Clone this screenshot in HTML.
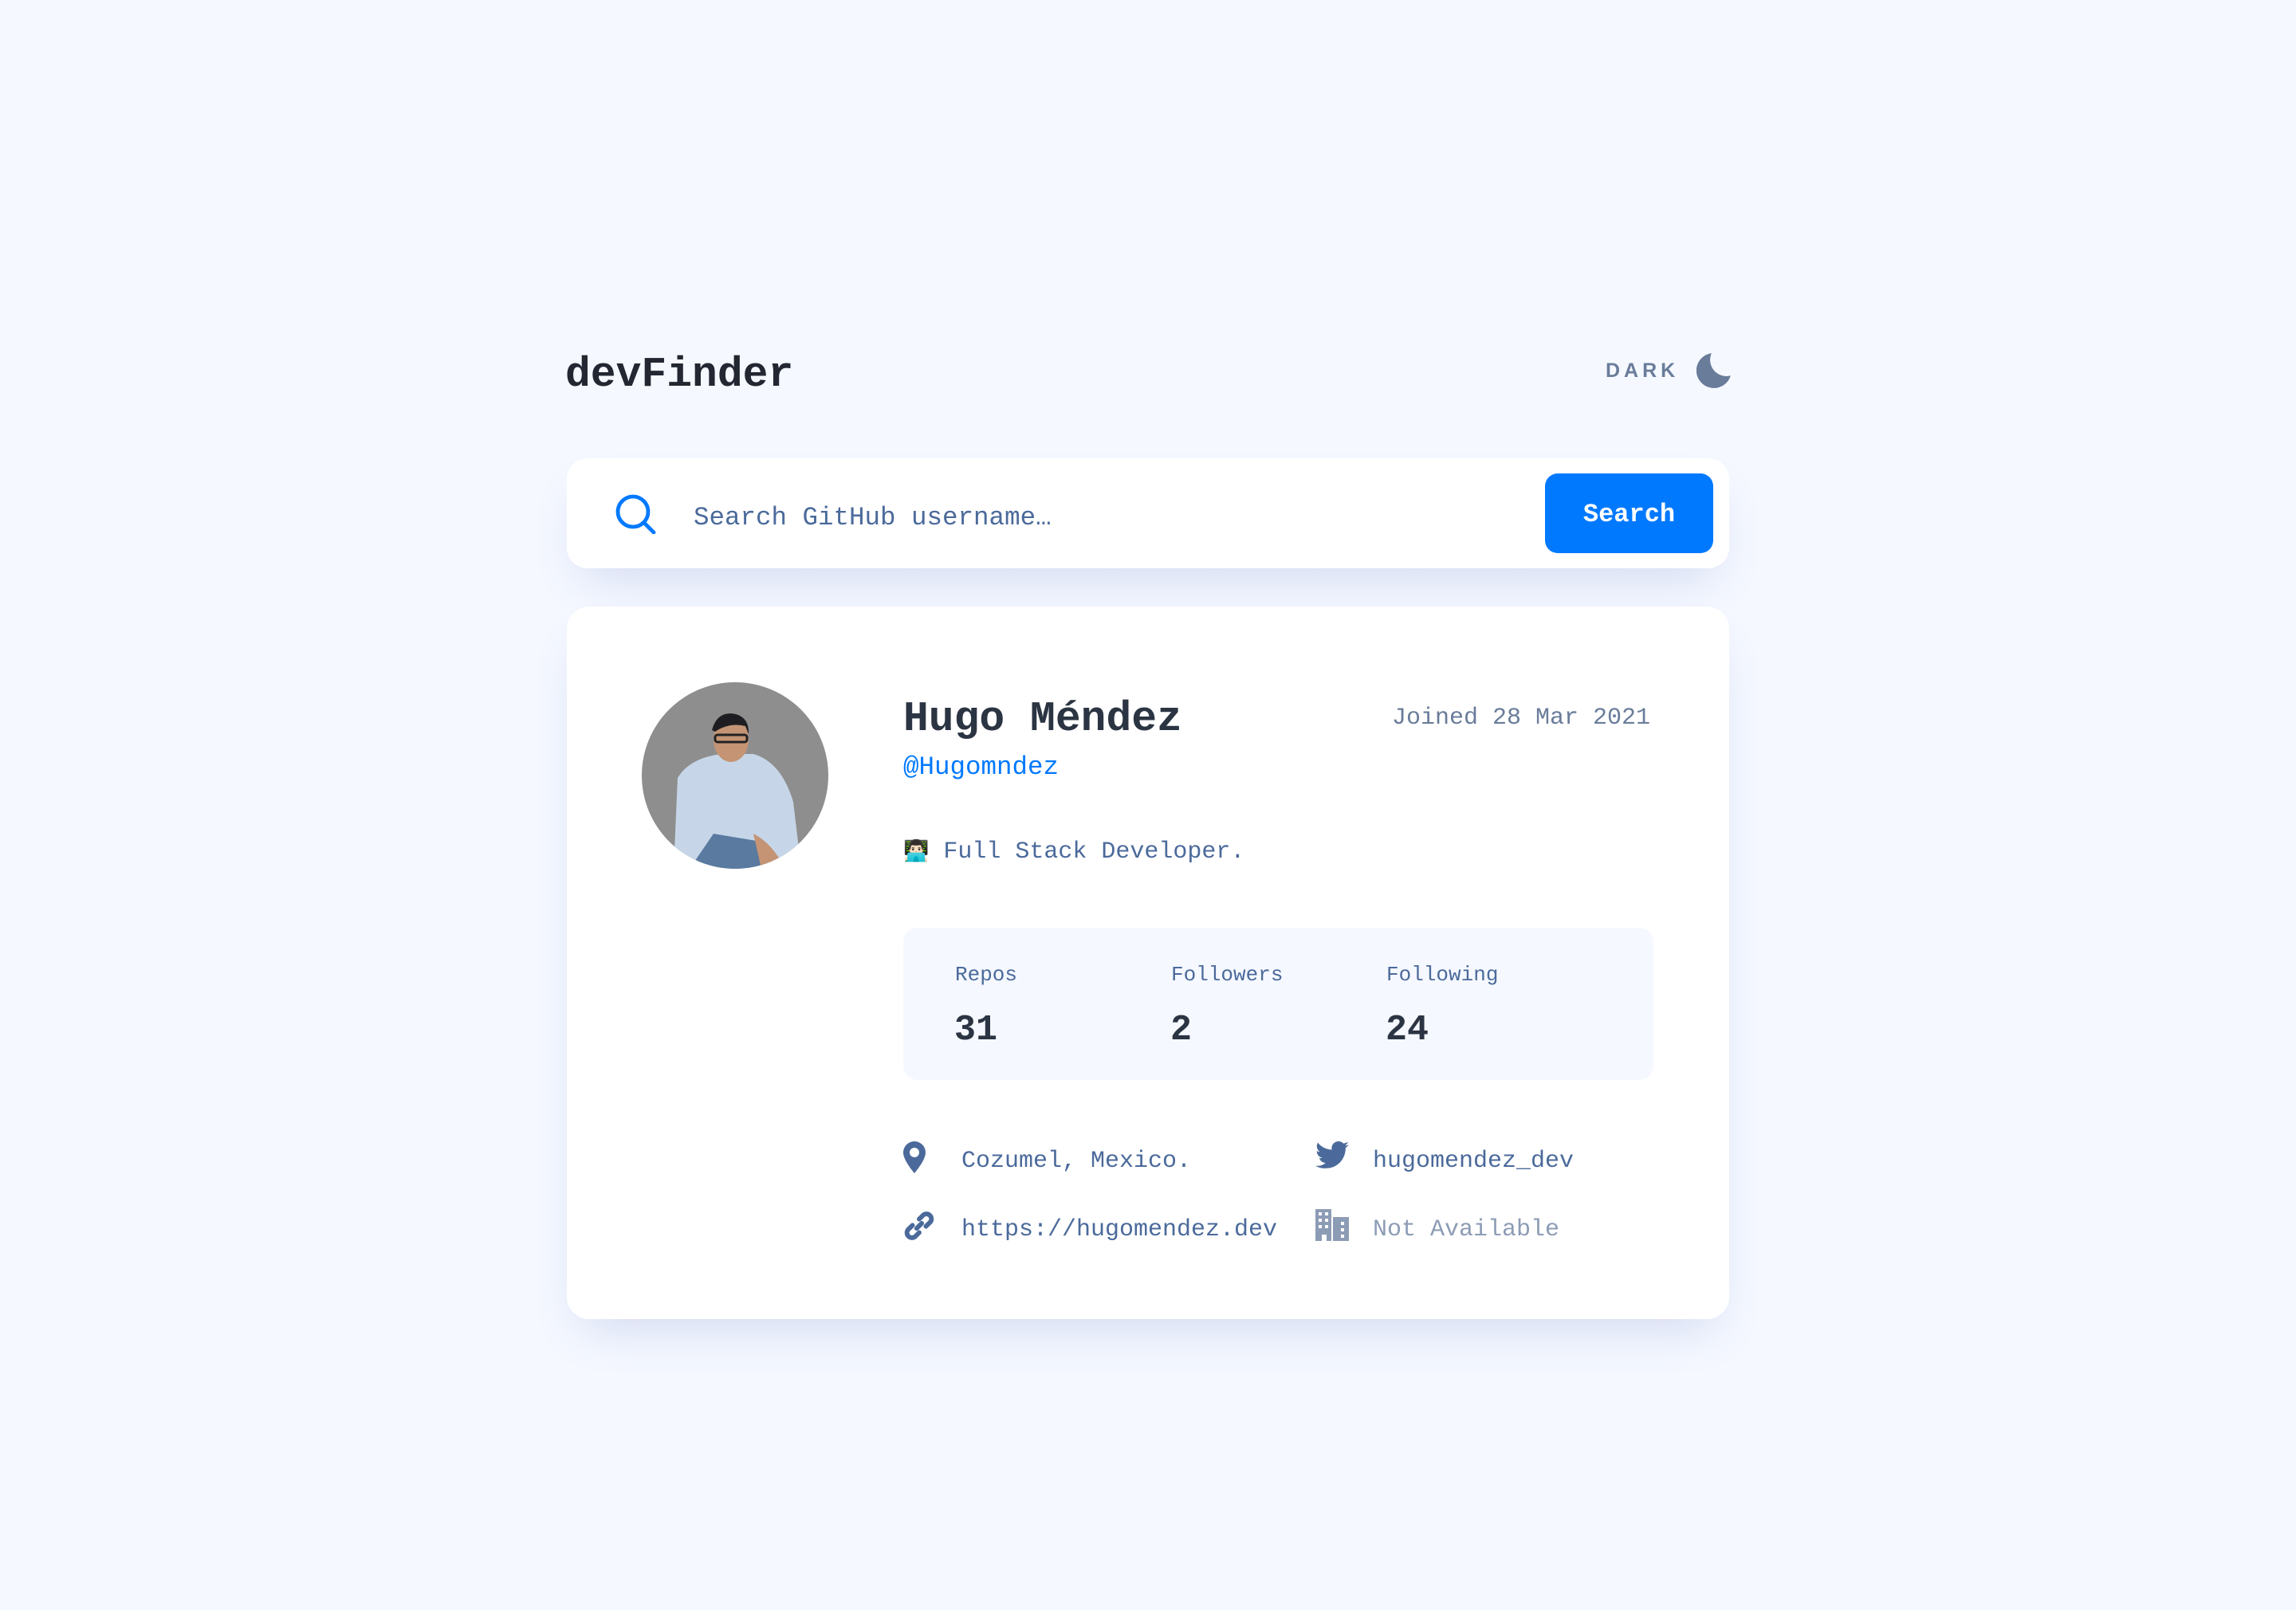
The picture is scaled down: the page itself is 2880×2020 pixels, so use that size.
<!DOCTYPE html>
<html><head><meta charset="utf-8"><style>
*{margin:0;padding:0;box-sizing:border-box}
body{width:2880px;height:2020px;background:#f5f8ff;font-family:"Liberation Mono",monospace;position:relative;overflow:hidden;color:#4b6a9b}
.a{position:absolute;white-space:nowrap}
.card{position:absolute;background:#fff;border-radius:28px;box-shadow:0 30px 60px -20px rgba(70,96,187,0.2)}
</style></head><body>
<div class="a" style="left:709px;top:440px;font-size:53px;line-height:60px;font-weight:bold;color:#222731">devFinder</div>
<div class="a" style="left:2014px;top:451px;font-size:25px;line-height:28px;font-weight:bold;letter-spacing:5px;color:#697c9a;font-family:'Liberation Sans',sans-serif">DARK</div>
<svg class="a" style="left:2128px;top:440px" width="44" height="48" viewBox="0 0 20 20"><path fill="#697c9a" d="M19.5 13.3A9.3 9.3 0 0 1 8.6 0.5a10 10 0 1 0 10.9 12.8z"/></svg>

<div class="card" style="left:711px;top:575px;width:1458px;height:138px;border-radius:26px"></div>
<svg class="a" style="left:772px;top:620px" width="52" height="50" viewBox="0 0 26 25"><circle cx="11" cy="11" r="9.5" fill="none" stroke="#0079ff" stroke-width="2.4"/><path d="M18 18l6 6" stroke="#0079ff" stroke-width="2.4" stroke-linecap="round"/></svg>
<div class="a" style="left:870px;top:631px;font-size:32.5px;line-height:38px;color:#4b6a9b">Search GitHub username…</div>
<div class="a" style="left:1938px;top:594px;width:211px;height:100px;background:#0079ff;border-radius:16px;color:#fff;font-weight:bold;font-size:32px;line-height:104px;text-align:center">Search</div>

<div class="card" style="left:711px;top:761px;width:1458px;height:894px"></div>
<svg class="a" style="left:805px;top:856px" width="234" height="234" viewBox="0 0 234 234">
<defs><clipPath id="c"><circle cx="117" cy="117" r="117"/></clipPath></defs>
<g clip-path="url(#c)">
<rect width="234" height="234" fill="#8e8e8e"/>
<path d="M40 234 L45 120 Q60 95 100 90 L140 90 Q175 100 190 150 L200 234Z" fill="#c6d6e8"/>
<path d="M60 234 L90 190 L150 200 L170 234Z" fill="#5a7aa0"/>
<ellipse cx="112" cy="72" rx="22" ry="28" fill="#c49474"/>
<path d="M88 60 Q95 35 118 40 Q135 45 134 65 L130 55 Q110 50 92 62Z" fill="#1e1e22"/>
<rect x="92" y="66" width="40" height="9" rx="3" fill="none" stroke="#222" stroke-width="3"/>
<path d="M140 190 Q160 200 175 225 L150 234 Z" fill="#c49474"/>
</g></svg>

<div class="a" style="left:1133px;top:872px;font-size:53px;line-height:60px;font-weight:bold;color:#2b3442">Hugo Méndez</div>
<div class="a" style="left:1746px;top:884px;font-size:30px;line-height:34px;color:#697c9a">Joined 28 Mar 2021</div>
<div class="a" style="left:1133px;top:944px;font-size:32.5px;line-height:38px;color:#0079ff">@Hugomndez</div>
<div class="a" style="left:1133px;top:1049px;font-size:30px;line-height:34px;color:#4b6a9b"><span style="font-family:'Noto Sans CJK JP',sans-serif;font-size:26px">👨🏻‍💻</span> Full Stack Developer.</div>

<div class="a" style="left:1133px;top:1164px;width:941px;height:191px;background:#f5f8ff;border-radius:18px"></div>
<div class="a" style="left:1198px;top:1208px;font-size:26px;line-height:30px">Repos</div>
<div class="a" style="left:1469px;top:1208px;font-size:26px;line-height:30px">Followers</div>
<div class="a" style="left:1739px;top:1208px;font-size:26px;line-height:30px">Following</div>
<div class="a" style="left:1197px;top:1267px;font-size:45px;line-height:52px;font-weight:bold;color:#2b3442">31</div>
<div class="a" style="left:1468px;top:1267px;font-size:45px;line-height:52px;font-weight:bold;color:#2b3442">2</div>
<div class="a" style="left:1738px;top:1267px;font-size:45px;line-height:52px;font-weight:bold;color:#2b3442">24</div>

<svg class="a" style="left:1133px;top:1432px" width="28" height="40" viewBox="0 0 14 20"><path fill="#4b6a9b" d="M7 0a7 7 0 0 0-7 7c0 5 7 13 7 13s7-8 7-13a7 7 0 0 0-7-7zm0 10a3 3 0 1 1 0-6 3 3 0 0 1 0 6z"/></svg>
<div class="a" style="left:1206px;top:1440px;font-size:30px;line-height:34px">Cozumel, Mexico.</div>
<svg class="a" style="left:1650px;top:1432px" width="42" height="34" viewBox="0 0 20 16"><path fill="#4b6a9b" d="M20 1.9c-.7.3-1.5.5-2.4.6.9-.5 1.5-1.3 1.8-2.3-.8.5-1.7.8-2.6 1a4.1 4.1 0 0 0-7 3.7A11.6 11.6 0 0 1 1.4.7a4.1 4.1 0 0 0 1.3 5.5c-.7 0-1.3-.2-1.9-.5 0 2 1.4 3.7 3.3 4.1-.6.2-1.2.2-1.8.1.5 1.6 2 2.8 3.8 2.9A8.2 8.2 0 0 1 0 14.5 11.6 11.6 0 0 0 6.3 16c7.5 0 11.7-6.3 11.7-11.7v-.5c.8-.6 1.5-1.3 2-2z"/></svg>
<div class="a" style="left:1722px;top:1440px;font-size:30px;line-height:34px">hugomendez_dev</div>
<svg class="a" style="left:1132px;top:1517px" width="42" height="42" viewBox="0 0 20 20"><g fill="none" stroke="#4b6a9b" stroke-width="2.8" stroke-linecap="round"><path d="M8.5 11.5l3-3"/><path d="M10 6l2.5-2.5a3 3 0 0 1 4.2 4.2L14 10.3"/><path d="M10 14l-2.5 2.5a3 3 0 0 1-4.2-4.2L6 9.7"/></g></svg>
<div class="a" style="left:1206px;top:1526px;font-size:30px;line-height:34px">https://hugomendez.dev</div>
<svg class="a" style="left:1650px;top:1517px" width="42" height="40" viewBox="0 0 21 20"><path fill="#8d9cb5" d="M0 0h10v20H7v-4H4v4H0zM11 5h10v15h-10z"/><g fill="#fff"><rect x="2" y="2" width="2" height="2"/><rect x="6" y="2" width="2" height="2"/><rect x="2" y="6" width="2" height="2"/><rect x="6" y="6" width="2" height="2"/><rect x="2" y="10" width="2" height="2"/><rect x="6" y="10" width="2" height="2"/><rect x="16" y="8" width="2" height="2"/><rect x="16" y="12" width="2" height="2"/><rect x="16" y="16" width="2" height="2"/></g></svg>
<div class="a" style="left:1722px;top:1526px;font-size:30px;line-height:34px;color:#8d9cb5">Not Available</div>
</body></html>
